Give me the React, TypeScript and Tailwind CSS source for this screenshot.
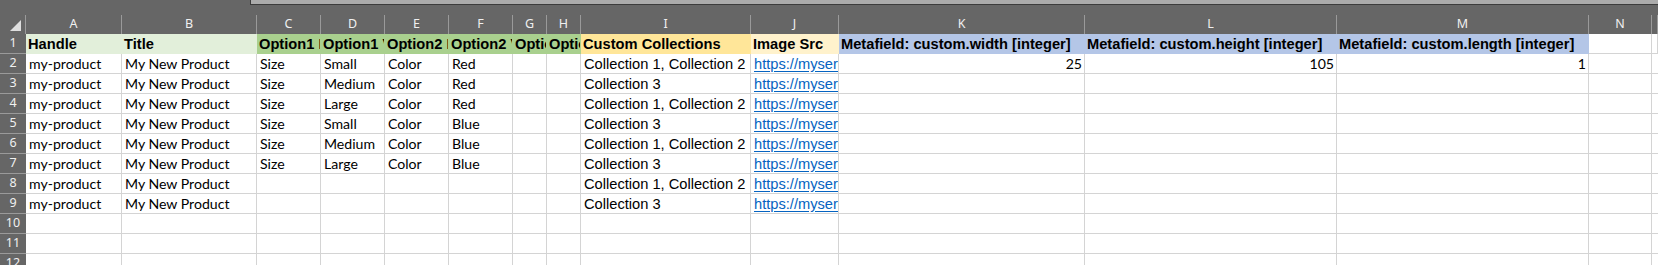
const columns = [
  { letter: 'A', w: 96 },
  { letter: 'B', w: 135 },
  { letter: 'C', w: 64 },
  { letter: 'D', w: 64 },
  { letter: 'E', w: 64 },
  { letter: 'F', w: 64 },
  { letter: 'G', w: 34 },
  { letter: 'H', w: 34 },
  { letter: 'I', w: 170 },
  { letter: 'J', w: 88 },
  { letter: 'K', w: 246 },
  { letter: 'L', w: 252 },
  { letter: 'M', w: 252 },
  { letter: 'N', w: 63 },
  { letter: '', w: 0 },
];

const headers = [
  { text: 'Handle', fill: 'bg-[#e2efda] border-[#e2efda]' },
  { text: 'Title', fill: 'bg-[#e2efda] border-[#e2efda]' },
  { text: 'Option1 Name', fill: 'bg-[#a9d08e] border-[#a9d08e]' },
  { text: 'Option1 Value', fill: 'bg-[#a9d08e] border-[#a9d08e]' },
  { text: 'Option2 Name', fill: 'bg-[#a9d08e] border-[#a9d08e]' },
  { text: 'Option2 Value', fill: 'bg-[#a9d08e] border-[#a9d08e]' },
  { text: 'Option3 Name', fill: 'bg-[#a9d08e] border-[#a9d08e]' },
  { text: 'Option3 Value', fill: 'bg-[#a9d08e] border-[#a9d08e]' },
  { text: 'Custom Collections', fill: 'bg-[#ffe699] border-[#ffe699]' },
  { text: 'Image Src', fill: 'bg-[#fff2cc] border-[#fff2cc]' },
  { text: 'Metafield: custom.width [integer]', fill: 'bg-[#b4c6e7] border-[#b4c6e7]' },
  { text: 'Metafield: custom.height [integer]', fill: 'bg-[#b4c6e7] border-[#b4c6e7]' },
  { text: 'Metafield: custom.length [integer]', fill: 'bg-[#b4c6e7] border-[#b4c6e7]' },
  { text: '', fill: 'bg-white border-[#d4d4d4]' },
  { text: '', fill: 'bg-white border-[#d4d4d4]' },
];

const link = 'https://myserver.com/images/product.jpg';
const c1 = 'Collection 1, Collection 2';
const c3 = 'Collection 3';

const data: string[][] = [
  ['my-product', 'My New Product', 'Size', 'Small', 'Color', 'Red', '', '', c1, link, '25', '105', '1'],
  ['my-product', 'My New Product', 'Size', 'Medium', 'Color', 'Red', '', '', c3, link],
  ['my-product', 'My New Product', 'Size', 'Large', 'Color', 'Red', '', '', c1, link],
  ['my-product', 'My New Product', 'Size', 'Small', 'Color', 'Blue', '', '', c3, link],
  ['my-product', 'My New Product', 'Size', 'Medium', 'Color', 'Blue', '', '', c1, link],
  ['my-product', 'My New Product', 'Size', 'Large', 'Color', 'Blue', '', '', c3, link],
  ['my-product', 'My New Product', '', '', '', '', '', '', c1, link],
  ['my-product', 'My New Product', '', '', '', '', '', '', c3, link],
  [],
  [],
  [],
];

const gridCols =
  'grid grid-cols-[26px_96px_135px_64px_64px_64px_64px_34px_34px_170px_88px_246px_252px_252px_63px_1fr]';

const calibri = "font-['Lato',_'Carlito',_sans-serif]";
const arial = "font-['Liberation_Sans',_Arial,_sans-serif]";
const segoe = "font-['Noto_Sans',_'Open_Sans',_sans-serif]";

function DataCell({ value, col }: { value?: string; col: number }) {
  const isArial = col === 8 || col === 9;
  const isNumber = col >= 10 && col <= 12;
  return (
    <div
      className={`h-[20px] border-r border-b border-[#d4d4d4] bg-white overflow-hidden whitespace-nowrap flex items-end px-[3px] leading-[18px] text-black ${
        isArial ? `${arial} text-[14.67px]` : `${calibri} text-[14.1px]`
      } ${isNumber ? 'justify-end pr-[2px]' : ''}`}
    >
      {col === 9 && value ? (
        <span className="text-[#0563c1] underline underline-offset-[2px]">{value}</span>
      ) : (
        <span>{value}</span>
      )}
    </div>
  );
}

export default function App() {
  return (
    <div className="w-[1658px] h-[265px] overflow-hidden bg-white">
      {/* top strip with scroll area */}
      <div className="h-[15px] bg-[#666666] flex">
        <div className="w-[250px]" />
        <div className="flex-1 h-[5px] bg-[#ababab] border-l border-b border-[#3c3c3c]" />
      </div>

      {/* column letters */}
      <div className={`${gridCols} h-[19px] bg-[#666666]`}>
        <div className="relative border-r border-[#9a9a9a]">
          <div className="absolute right-[4px] bottom-[3px] w-0 h-0 border-l-[11px] border-l-transparent border-b-[11px] border-b-[#dedede]" />
        </div>
        {columns.map((c, i) => (
          <div
            key={i}
            className={`flex items-center justify-center border-r border-[#9a9a9a] text-[12.5px] text-[#f0f0f0] ${segoe}`}
          >
            {c.letter}
          </div>
        ))}
      </div>

      {/* row 1: headers */}
      <div className={gridCols}>
        <div className={`h-[20px] bg-[#666666] border-b border-[#9a9a9a] flex items-center justify-center text-[12.5px] text-[#f0f0f0] ${segoe}`}>
          1
        </div>
        {headers.map((h, i) => (
          <div
            key={i}
            className={`h-[20px] border-r border-b overflow-hidden whitespace-nowrap flex items-end px-[2px] text-[14.67px] leading-[18px] font-bold text-black ${arial} ${h.fill}`}
          >
            {h.text}
          </div>
        ))}
      </div>

      {/* data rows */}
      {data.map((row, r) => (
        <div key={r} className={gridCols}>
          <div className={`h-[20px] bg-[#666666] border-b border-[#9a9a9a] flex items-center justify-center text-[12.5px] text-[#f0f0f0] ${segoe}`}>
            {r + 2}
          </div>
          {columns.map((_, c) => (
            <DataCell key={c} col={c} value={row[c]} />
          ))}
        </div>
      ))}
    </div>
  );
}
